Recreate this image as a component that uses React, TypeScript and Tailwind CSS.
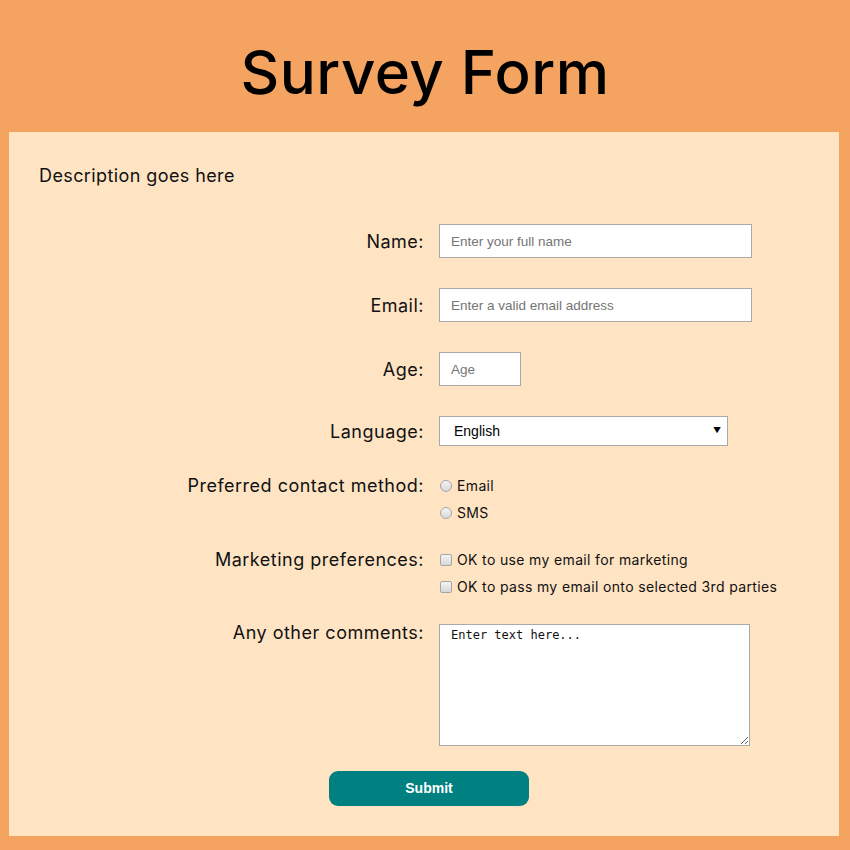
import React from "react";

const labelFont = { fontFamily: "Inter, 'Open Sans', sans-serif" };

const Row: React.FC<{
  label: string;
  align?: "center" | "start";
  className?: string;
  labelClass?: string;
  children: React.ReactNode;
}> = ({ label, align = "center", className = "", labelClass = "leading-[27px]", children }) => (
  <div className={`flex ${align === "center" ? "items-center" : "items-start"} ${className}`}>
    <label
      className={`w-[430px] shrink-0 pr-[15px] text-right text-[18px] tracking-[0.5px] text-[#111] ${labelClass}`}
    >
      {label}
    </label>
    <div className="flex flex-col">{children}</div>
  </div>
);

const textInput =
  "h-[34px] bg-white border border-[#a9a9a9] px-[11px] text-[13.5px] text-black placeholder:text-[#757575] outline-none font-['Liberation_Sans',Arial,sans-serif]";

export default function App() {
  return (
    <div className="min-h-[850px] w-[850px] bg-[#f4a460] pb-[14px]" style={labelFont}>
      {/* Header */}
      <div className="flex h-[132px] items-center justify-center pt-[12px]">
        <h1 className="text-[60px] font-medium tracking-[0.5px] text-black leading-none">Survey Form</h1>
      </div>

      {/* Panel */}
      <div className="ml-[9px] w-[830px] bg-[#ffe4c4] pt-[33px] pb-[30px]">
        <p className="ml-[30px] text-[18px] leading-[22px] tracking-[0.4px] text-[#111]">Description goes here</p>

        <form className="mt-[37px] flex flex-col" onSubmit={(e) => e.preventDefault()}>
          <Row label="Name:">
            <input type="text" placeholder="Enter your full name" className={`${textInput} w-[313px]`} />
          </Row>

          <Row label="Email:" className="mt-[30px]">
            <input type="email" placeholder="Enter a valid email address" className={`${textInput} w-[313px]`} />
          </Row>

          <Row label="Age:" className="mt-[30px]">
            <input type="number" placeholder="Age" className={`${textInput} w-[82px]`} />
          </Row>

          <Row label="Language:" className="mt-[30px]">
            <div className="relative h-[30px] w-[289px]">
              <select className="h-[30px] w-[289px] appearance-none border border-[#a9a9a9] bg-white pl-[14px] text-[14px] text-black outline-none font-['Liberation_Sans',Arial,sans-serif]">
                <option>English</option>
                <option>Français</option>
                <option>Español</option>
              </select>
              <span className="pointer-events-none absolute right-[7px] top-[10px] text-[8px] leading-none text-black">▼</span>
            </div>
          </Row>

          <Row label="Preferred contact method:" align="start" className="mt-[26px]">
            {["Email", "SMS"].map((o) => (
              <label key={o} className="flex h-[27px] items-center gap-[5px] text-[14px] tracking-[0.35px] text-[#111]">
                <input
                  type="radio"
                  name="contact"
                  className="ml-[1px] h-[12px] w-[12px] appearance-none rounded-full border border-[#a6a6a6] bg-gradient-to-b from-[#f4f4f4] to-[#d8d8d8]"
                />
                {o}
              </label>
            ))}
          </Row>

          <Row label="Marketing preferences:" align="start" className="mt-[20px]">
            {["OK to use my email for marketing", "OK to pass my email onto selected 3rd parties"].map((o) => (
              <label key={o} className="flex h-[27px] items-center gap-[5px] text-[14px] tracking-[0.35px] text-[#111]">
                <input
                  type="checkbox"
                  className="ml-[1px] h-[12px] w-[12px] appearance-none rounded-[2px] border border-[#a6a6a6] bg-gradient-to-b from-[#f4f4f4] to-[#d8d8d8]"
                />
                {o}
              </label>
            ))}
          </Row>

          <Row label="Any other comments:" align="start" className="mt-[24px]" labelClass="leading-[18px]">
            <textarea
              defaultValue="Enter text here..."
              className="h-[122px] w-[311px] resize border border-[#a9a9a9] bg-white px-[11px] py-[3px] text-[12px] leading-[15px] text-[#111] outline-none font-['DejaVu_Sans_Mono',monospace]"
            />
          </Row>

          <div className="mt-[25px] flex justify-center pl-[10px]">
            <button
              type="submit"
              className="h-[35px] w-[200px] rounded-[9px] bg-[#008080] text-[14px] font-bold text-white font-['Liberation_Sans',Arial,sans-serif]"
            >
              Submit
            </button>
          </div>
        </form>
      </div>
    </div>
  );
}
